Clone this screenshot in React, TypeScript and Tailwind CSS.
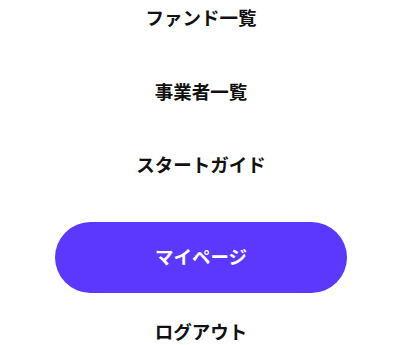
export default function App() {
  const links = ["ファンド一覧", "事業者一覧", "スタートガイド"];
  return (
    <div
      className="w-[400px] h-[345px] bg-white overflow-hidden flex flex-col items-center pt-[4px]"
      style={{ fontFamily: '"Noto Sans CJK JP", "Noto Sans", sans-serif' }}
    >
      {links.map((l, i) => (
        <a
          key={l}
          href="#"
          className={`text-[18.5px] leading-[27px] font-bold text-[#111] ml-[2px] ${i > 0 ? "mt-[46.5px]" : ""}`}
        >
          {l}
        </a>
      ))}
      <a
        href="#"
        className="mt-[43.5px] ml-[2px] w-[292px] h-[71px] rounded-full bg-[#5c38ff] text-white text-[18.5px] font-bold flex items-center justify-center"
      >
        マイページ
      </a>
      <a href="#" className="mt-[25px] ml-[2px] text-[18.5px] leading-[27px] font-bold text-[#111]">
        ログアウト
      </a>
    </div>
  );
}
